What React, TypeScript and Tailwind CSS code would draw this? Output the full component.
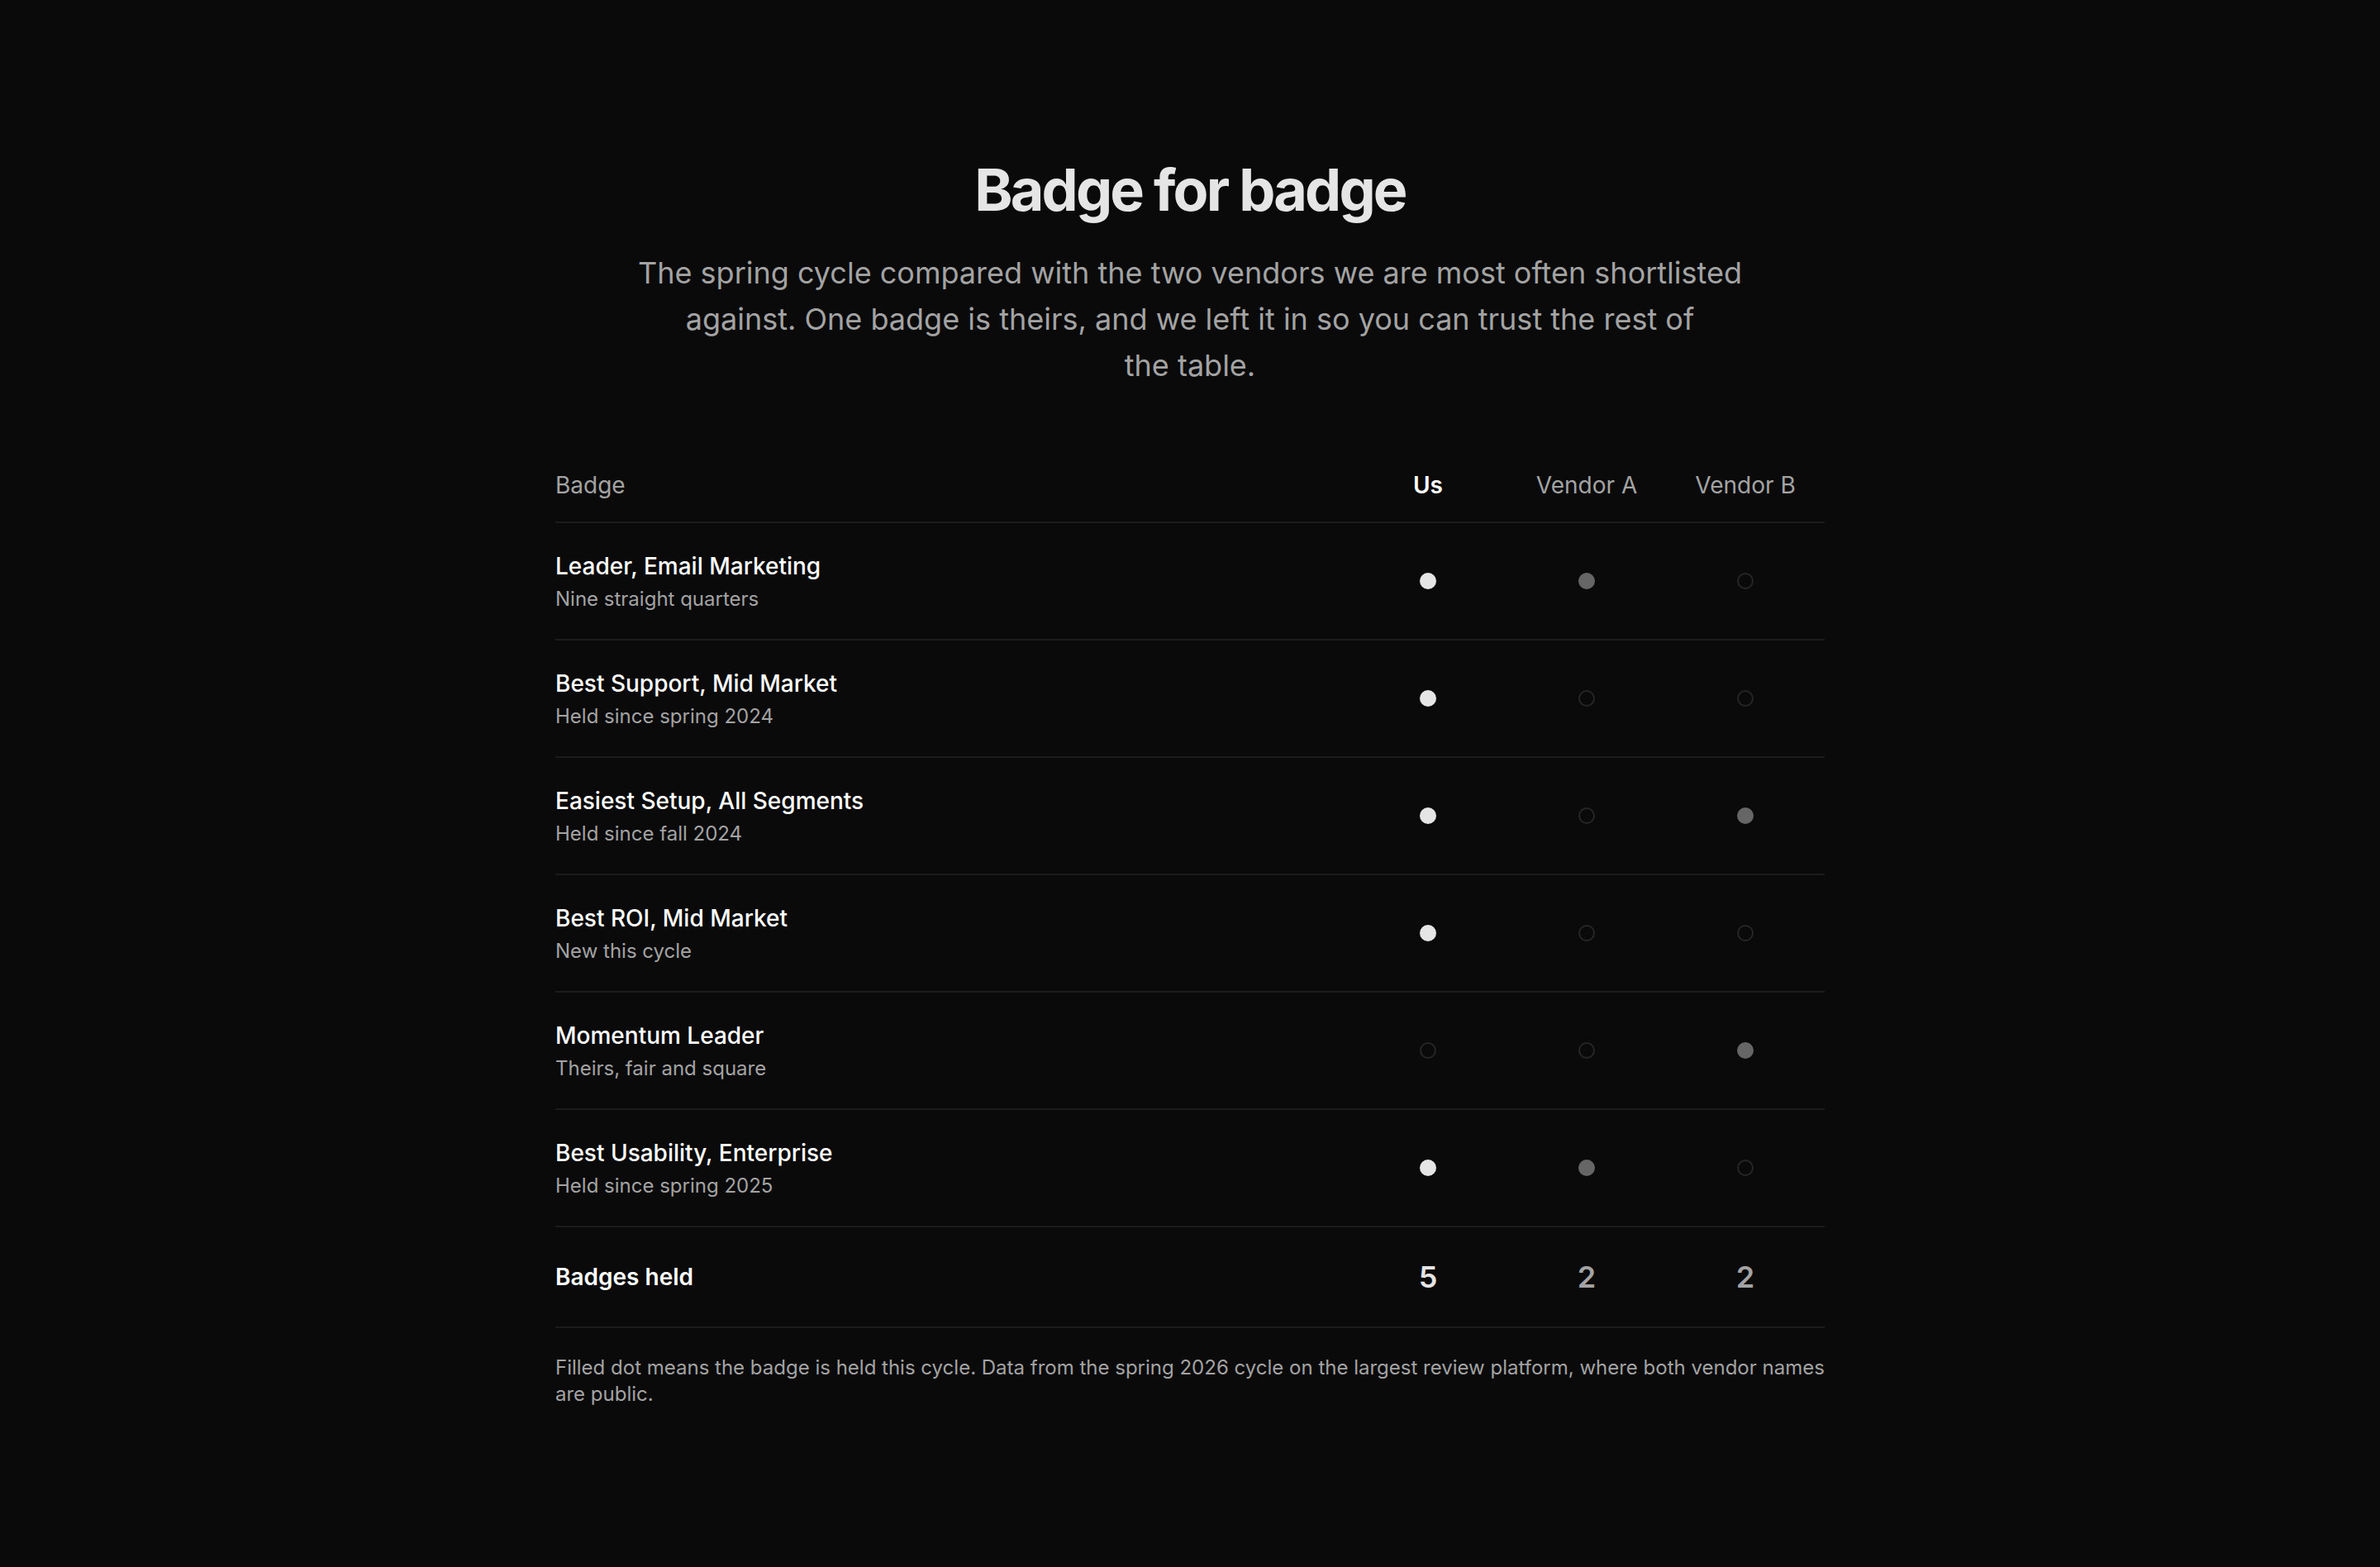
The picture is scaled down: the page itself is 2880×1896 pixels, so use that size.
const rows = [
  { name: "Leader, Email Marketing", note: "Nine straight quarters", held: [true, true, false] },
  { name: "Best Support, Mid Market", note: "Held since spring 2024", held: [true, false, false] },
  { name: "Easiest Setup, All Segments", note: "Held since fall 2024", held: [true, false, true] },
  { name: "Best ROI, Mid Market", note: "New this cycle", held: [true, false, false] },
  { name: "Momentum Leader", note: "Theirs, fair and square", held: [false, false, true] },
  { name: "Best Usability, Enterprise", note: "Held since spring 2025", held: [true, true, false] },
];

function Dot({ on, us }: { on: boolean; us: boolean }) {
  if (!on) return <span className="block w-5 h-5 rounded-full border-2 border-[#262626]" />;
  return <span className={`block w-5 h-5 rounded-full ${us ? "bg-[#e5e5e5]" : "bg-[#666666]"}`} />;
}

export default function App() {
  const totals = [0, 1, 2].map((i) => rows.filter((r) => r.held[i]).length);

  return (
    <div
      className="min-h-screen bg-[#0a0a0a] text-[#fafafa] pt-[190px] pb-32"
      style={{ fontFamily: "Inter, 'Noto Sans', sans-serif" }}
    >
      <div className="w-[1536px] mx-auto">
        <h1 className="text-center text-[70px] leading-[80px] font-bold tracking-[-0.04em] text-[#e5e5e5]">
          Badge for badge
        </h1>
        <p className="mt-8 mx-auto max-w-[1344px] text-center text-pretty text-[36px] leading-[56px] text-[#a3a3a3]">
          The spring cycle compared with the two vendors we are most often shortlisted against. One badge is
          theirs, and we left it in so you can trust the rest of the table.
        </p>

        <div className="mt-[97px]">
          <div className="flex items-center pb-6 border-b-2 border-[#1c1c1c] text-[28px] leading-[40px]">
            <div className="flex-1 text-[#a3a3a3]">Badge</div>
            <div className="w-[192px] text-center font-semibold text-white">Us</div>
            <div className="w-[192px] text-center text-[#a3a3a3]">Vendor A</div>
            <div className="w-[192px] text-center text-[#a3a3a3]">Vendor B</div>
          </div>

          {rows.map((r) => (
            <div key={r.name} className="flex items-center py-8 border-b-2 border-[#1c1c1c]">
              <div className="flex-1 flex flex-col">
                <span className="text-[28px] leading-[40px] font-medium text-white">{r.name}</span>
                <span className="mt-1 text-[24px] leading-[32px] text-[#a3a3a3]">{r.note}</span>
              </div>
              {r.held.map((h, i) => (
                <div key={i} className="w-[192px] flex justify-center">
                  <Dot on={h} us={i === 0} />
                </div>
              ))}
            </div>
          ))}

          <div className="flex items-center py-8 border-b-2 border-[#1c1c1c]">
            <div className="flex-1 text-[28px] leading-[56px] font-semibold text-white">Badges held</div>
            {totals.map((t, i) => (
              <div
                key={i}
                className={`w-[192px] text-center text-[36px] leading-[56px] font-semibold ${
                  i === 0 ? "text-[#e5e5e5]" : "text-[#a3a3a3]"
                }`}
              >
                {t}
              </div>
            ))}
          </div>

          <p className="mt-8 text-[24px] leading-[32px] text-[#a3a3a3]">
            Filled dot means the badge is held this cycle. Data from the spring 2026 cycle on the largest review
            platform, where both vendor names are public.
          </p>
        </div>
      </div>
    </div>
  );
}
